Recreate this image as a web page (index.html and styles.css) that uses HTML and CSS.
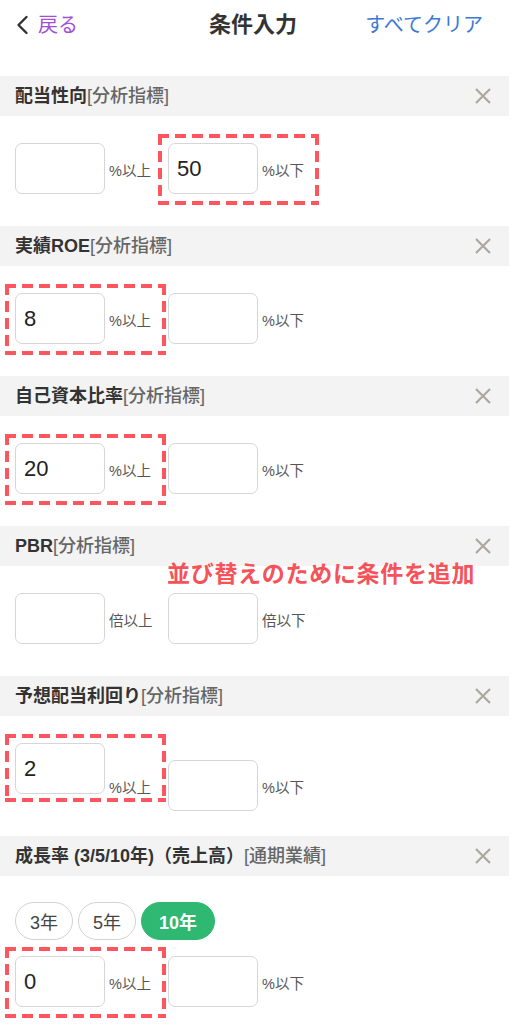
FILE: index.html
```html
<!DOCTYPE html>
<html lang="ja">
<head>
  <meta charset="UTF-8">
  <meta name="viewport" content="width=device-width, initial-scale=1.0">
  <title>条件入力</title>
  <link rel="stylesheet" href="styles.css">
</head>
<body>

<div class="page">
  <header class="topbar">
    <a href="#" class="back">
      <svg class="chevron" width="14" height="20" viewBox="0 0 14 20"><path d="M11.5 2 L3.5 10 L11.5 18" fill="none" stroke="#333" stroke-width="2.4" stroke-linecap="round" stroke-linejoin="round"/></svg>
      <span>戻る</span>
    </a>
    <h1 class="title">条件入力</h1>
    <a href="#" class="clear-all">すべてクリア</a>
  </header>

  <section class="cond">
    <div class="cond-head">
      <span class="cond-title">配当性向<span class="cond-tag">[分析指標]</span></span>
      <button class="cond-close" aria-label="削除"><svg width="18" height="18" viewBox="0 0 18 18"><path d="M2 2 L16 16 M16 2 L2 16" stroke="#aaa89f" stroke-width="2.2"/></svg></button>
    </div>
    <div class="cond-body">
      <div class="range">
        <label class="field"><input type="text" class="num" value=""><span class="unit">%以上</span></label>
        <label class="field marked"><input type="text" class="num" value="50"><span class="unit">%以下</span></label>
      </div>
    </div>
  </section>

  <section class="cond">
    <div class="cond-head">
      <span class="cond-title">実績ROE<span class="cond-tag">[分析指標]</span></span>
      <button class="cond-close" aria-label="削除"><svg width="18" height="18" viewBox="0 0 18 18"><path d="M2 2 L16 16 M16 2 L2 16" stroke="#aaa89f" stroke-width="2.2"/></svg></button>
    </div>
    <div class="cond-body">
      <div class="range">
        <label class="field marked"><input type="text" class="num" value="8"><span class="unit">%以上</span></label>
        <label class="field"><input type="text" class="num" value=""><span class="unit">%以下</span></label>
      </div>
    </div>
  </section>

  <section class="cond">
    <div class="cond-head">
      <span class="cond-title">自己資本比率<span class="cond-tag">[分析指標]</span></span>
      <button class="cond-close" aria-label="削除"><svg width="18" height="18" viewBox="0 0 18 18"><path d="M2 2 L16 16 M16 2 L2 16" stroke="#aaa89f" stroke-width="2.2"/></svg></button>
    </div>
    <div class="cond-body">
      <div class="range">
        <label class="field marked"><input type="text" class="num" value="20"><span class="unit">%以上</span></label>
        <label class="field"><input type="text" class="num" value=""><span class="unit">%以下</span></label>
      </div>
    </div>
  </section>

  <section class="cond annotated">
    <div class="cond-head">
      <span class="cond-title">PBR<span class="cond-tag">[分析指標]</span></span>
      <button class="cond-close" aria-label="削除"><svg width="18" height="18" viewBox="0 0 18 18"><path d="M2 2 L16 16 M16 2 L2 16" stroke="#aaa89f" stroke-width="2.2"/></svg></button>
    </div>
    <p class="note">並び替えのために条件を追加</p>
    <div class="cond-body">
      <div class="range">
        <label class="field"><input type="text" class="num" value=""><span class="unit">倍以上</span></label>
        <label class="field"><input type="text" class="num" value=""><span class="unit">倍以下</span></label>
      </div>
    </div>
  </section>

  <section class="cond">
    <div class="cond-head">
      <span class="cond-title">予想配当利回り<span class="cond-tag">[分析指標]</span></span>
      <button class="cond-close" aria-label="削除"><svg width="18" height="18" viewBox="0 0 18 18"><path d="M2 2 L16 16 M16 2 L2 16" stroke="#aaa89f" stroke-width="2.2"/></svg></button>
    </div>
    <div class="cond-body short">
      <div class="range">
        <label class="field marked raised"><input type="text" class="num" value="2"><span class="unit">%以上</span></label>
        <label class="field"><input type="text" class="num" value=""><span class="unit">%以下</span></label>
      </div>
    </div>
  </section>

  <section class="cond">
    <div class="cond-head">
      <span class="cond-title">成長率 (3/5/10年)（売上高）<span class="cond-tag">[通期業績]</span></span>
      <button class="cond-close" aria-label="削除"><svg width="18" height="18" viewBox="0 0 18 18"><path d="M2 2 L16 16 M16 2 L2 16" stroke="#aaa89f" stroke-width="2.2"/></svg></button>
    </div>
    <div class="cond-body">
      <div class="chips">
        <button class="chip">3年</button>
        <button class="chip">5年</button>
        <button class="chip active">10年</button>
      </div>
      <div class="range">
        <label class="field marked"><input type="text" class="num" value="0"><span class="unit">%以上</span></label>
        <label class="field"><input type="text" class="num" value=""><span class="unit">%以下</span></label>
      </div>
    </div>
  </section>
</div>

</body>
</html>
```

FILE: styles.css
```css
body {
  margin: 0;
  padding: 0;
  background: #fff;
  font-family: "Liberation Sans", "Noto Sans CJK JP", sans-serif;
  color: #333;
}
.page {
  width: 509px;
}

/* top bar */
.topbar {
  height: 50px;
  margin-bottom: 26px;
  padding: 0 18px 0 15px;
  display: grid;
  grid-template-columns: 1fr auto 1fr;
  align-items: center;
}
.back {
  display: flex;
  align-items: center;
  gap: 9px;
  color: #a04fd6;
  text-decoration: none;
  font-size: 20px;
  line-height: 24px;
}
.chevron {
  display: block;
}
.title {
  margin: 0;
  font-size: 22px;
  font-weight: bold;
  line-height: 26px;
  color: #333;
}
.clear-all {
  justify-self: end;
  margin-right: 8px;
  color: #3a7ad6;
  text-decoration: none;
  font-size: 20px;
  line-height: 24px;
}

/* condition block */
.cond-head {
  height: 40px;
  padding: 0 17px 0 15px;
  background-color: #f3f3f3;
  display: flex;
  align-items: center;
  justify-content: space-between;
}
.cond-title {
  font-size: 18px;
  font-weight: bold;
  line-height: 22px;
  color: #333;
}
.cond-tag {
  font-weight: 500;
  color: #666;
}
.cond-close {
  border: none;
  background: none;
  padding: 0;
  display: flex;
  cursor: pointer;
}
.cond-body {
  padding: 27px 0 32px 15px;
}
.cond-body.short {
  padding-bottom: 25px;
}

.range {
  display: flex;
  align-items: flex-end;
  gap: 14px;
}
.field {
  position: relative;
  display: flex;
  align-items: flex-end;
  gap: 4px;
}
.num {
  box-sizing: border-box;
  width: 90px;
  height: 51px;
  padding: 0 8px;
  border: 1.5px solid #d6d6d6;
  border-radius: 7px;
  font-family: inherit;
  font-size: 22px;
  color: #222;
  background: #fff;
  outline: none;
}
.unit {
  width: 45px;
  margin-bottom: 13px;
  font-size: 14.5px;
  line-height: 20px;
  color: #555;
  white-space: nowrap;
}
.field.raised .num {
  margin-bottom: 17px;
}

/* red dashed frame drawn around a field */
.field.marked::after {
  content: "";
  position: absolute;
  top: -9px;
  bottom: -11px;
  left: -10px;
  right: -12px;
  pointer-events: none;
  background:
    repeating-linear-gradient(90deg, #ff555c 0 11px, transparent 11px 17px) top left / 100% 4px no-repeat,
    repeating-linear-gradient(90deg, #ff555c 0 11px, transparent 11px 17px) bottom left / 100% 4px no-repeat,
    repeating-linear-gradient(180deg, #ff555c 0 11px, transparent 11px 17px) top left / 4px 100% no-repeat,
    repeating-linear-gradient(180deg, #ff555c 0 11px, transparent 11px 17px) top right / 4px 100% no-repeat;
}
.field.marked.raised::after {
  bottom: 9px;
}

/* annotation text over the PBR block */
.annotated {
  position: relative;
}
.note {
  position: absolute;
  left: 167px;
  top: 34px;
  margin: 0;
  font-size: 23px;
  font-weight: bold;
  line-height: 28px;
  letter-spacing: 0.7px;
  color: #f5525a;
}

/* period chips */
.chips {
  display: flex;
  gap: 5px;
  margin: -1px 0 16px;
}
.chip {
  height: 38px;
  padding: 0 14px;
  border: 1.5px solid #d2d2d2;
  border-radius: 19px;
  background: #fff;
  font-family: inherit;
  font-size: 18px;
  color: #444;
}
.chip.active {
  padding: 0 17px;
  border-color: #2eb872;
  background-color: #2eb872;
  color: #fff;
  font-weight: bold;
}
```
